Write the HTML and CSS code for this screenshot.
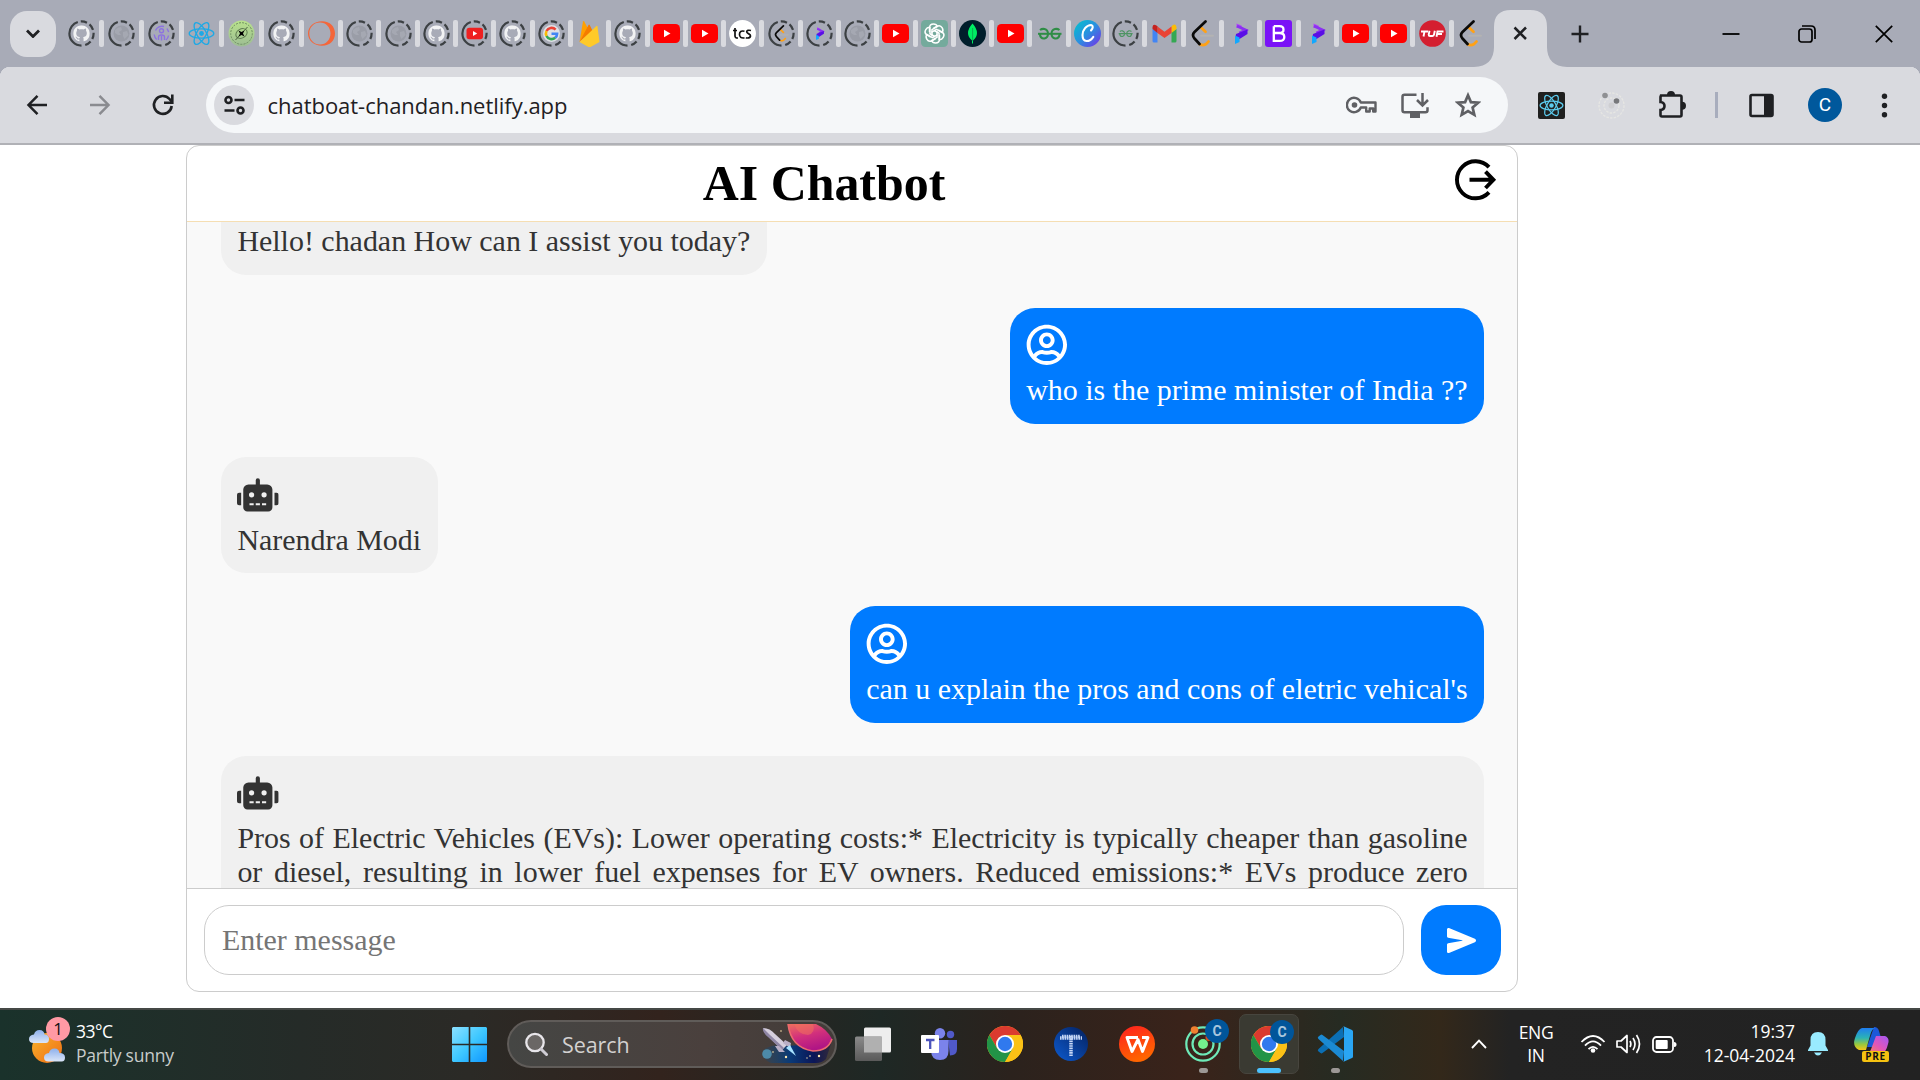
FILE: index.html
```html
<!DOCTYPE html>
<html lang="en">
<head>
<meta charset="utf-8">
<title>AI Chatbot</title>
<link rel="stylesheet" href="styles.css">
</head>
<body>
<svg class="defs" aria-hidden="true">
  <defs>
    <linearGradient id="g-canva" x1="0" y1="0" x2="1" y2="1"><stop offset="0" stop-color="#00c4cc"/><stop offset=".5" stop-color="#2a8fe0"/><stop offset="1" stop-color="#7d2ae8"/></linearGradient>
    <linearGradient id="g-green" x1="0" y1="0" x2="0" y2="1"><stop offset="0" stop-color="#b9e28c"/><stop offset="1" stop-color="#9dbd94"/></linearGradient>
    <linearGradient id="g-win" x1="0" y1="0" x2="1" y2="1"><stop offset="0" stop-color="#8be0ff"/><stop offset=".5" stop-color="#3fc8ff"/><stop offset="1" stop-color="#0f97ff"/></linearGradient>
    <linearGradient id="g-sun" x1="0" y1="0" x2="1" y2="1"><stop offset="0" stop-color="#f9b42d"/><stop offset="1" stop-color="#ef6c13"/></linearGradient>
    <linearGradient id="g-cloud" x1="0" y1="0" x2="0" y2="1"><stop offset="0" stop-color="#8db0ec"/><stop offset="1" stop-color="#dbe6f8"/></linearGradient>
    <linearGradient id="g-t" x1="1" y1="0" x2="0" y2="1"><stop offset="0" stop-color="#04205e"/><stop offset="1" stop-color="#0d5bd0"/></linearGradient>
    <linearGradient id="g-wps" x1="0" y1="0" x2=".4" y2="1"><stop offset="0" stop-color="#ff1f1f"/><stop offset="1" stop-color="#ff6500"/></linearGradient>
    <linearGradient id="g-planet" x1="0" y1="0" x2=".4" y2="1"><stop offset="0" stop-color="#f0705c"/><stop offset=".5" stop-color="#d2307c"/><stop offset="1" stop-color="#b01585"/></linearGradient>
    <linearGradient id="g-space" x1="0" y1="0" x2="1" y2="0"><stop offset="0" stop-color="#174a74" stop-opacity=".2"/><stop offset=".4" stop-color="#0a3a78"/><stop offset=".75" stop-color="#0b1658"/><stop offset="1" stop-color="#1c1740" stop-opacity=".5"/></linearGradient>
    <linearGradient id="g-gray" x1="0" y1="0" x2="0" y2="1"><stop offset="0" stop-color="#8a8a8a"/><stop offset="1" stop-color="#5a5a5a"/></linearGradient>
    <linearGradient id="g-cop" x1="0" y1="0" x2="0" y2="1"><stop offset="0" stop-color="#1f7df0"/><stop offset=".45" stop-color="#2bb3b5"/><stop offset=".75" stop-color="#9bc93c"/><stop offset="1" stop-color="#f5c518"/></linearGradient>
    <linearGradient id="g-cop2" x1="1" y1="0" x2="0" y2="1"><stop offset="0" stop-color="#a259f7"/><stop offset=".5" stop-color="#e255b8"/><stop offset="1" stop-color="#ff8a4c"/></linearGradient>

    <symbol id="ring" viewBox="0 0 27 27"><path d="M13.5 25.6A12.1 12.1 0 0 1 13.5 1.4A12.1 12.1 0 0 1 13.5 25.6" pathLength="100" fill="none" stroke="#3c4043" stroke-width="2.2" stroke-dasharray="45 4 8.5 4 8.5 4 8.5 4 8.5 5"/></symbol>
    <symbol id="octo" viewBox="0 0 16 16"><path fill="#fff" fill-opacity=".85" d="M8 0C3.58 0 0 3.58 0 8c0 3.54 2.29 6.53 5.47 7.59.4.07.55-.17.55-.38 0-.19-.01-.82-.01-1.49-2.01.37-2.53-.49-2.69-.94-.09-.23-.48-.94-.82-1.13-.28-.15-.68-.52-.01-.53.63-.01 1.08.58 1.23.82.72 1.21 1.87.87 2.33.66.07-.52.28-.87.51-1.07-1.78-.2-3.64-.89-3.64-3.95 0-.87.31-1.59.82-2.15-.08-.2-.36-1.02.08-2.12 0 0 .67-.21 2.2.82.64-.18 1.32-.27 2-.27s1.36.09 2 .27c1.53-1.04 2.2-.82 2.2-.82.44 1.1.16 1.92.08 2.12.51.56.82 1.27.82 2.15 0 3.07-1.87 3.75-3.65 3.95.29.25.54.73.54 1.48 0 1.07-.01 1.93-.01 2.2 0 .21.15.46.55.38A8.01 8.01 0 0 0 16 8c0-4.42-3.58-8-8-8z"/></symbol>
    <symbol id="github" viewBox="0 0 27 27"><use href="#ring"/><use href="#octo" x="5.2" y="5.2" width="16.6" height="16.6"/></symbol>
    <symbol id="globe" viewBox="0 0 27 27"><use href="#ring"/><circle cx="13.5" cy="13.5" r="8" fill="#9a9da7"/><path d="M7 10q3-3 6-3l1 3-3 2 2 3h-3l-3-2zM15 12l4-1 1.500 4-4 4-1.500-3z" fill="#a5a8b2"/></symbol>
    <symbol id="person" viewBox="0 0 27 27"><use href="#ring"/><g fill="none" stroke="#8c72e0" stroke-width="1.400"><circle cx="13.500" cy="10.800" r="2"/><path d="M10.500 20v-3q0-2 3-2t3 2v3M13.500 16v4.500M7.500 10.500a7 7 0 0 1 8.500-4M20.500 15.500a7 7 0 0 1-2.500 4.500M19 8.500l1.700 3.500M6.200 14.500q.5 3.500 2.500 5"/></g></symbol>
    <symbol id="atom" viewBox="0 0 27 27"><g fill="none" stroke="currentColor" stroke-width="1.300"><ellipse cx="13.500" cy="13.500" rx="12.300" ry="4.700"/><ellipse cx="13.500" cy="13.500" rx="12.300" ry="4.700" transform="rotate(60 13.500 13.500)"/><ellipse cx="13.500" cy="13.500" rx="12.300" ry="4.700" transform="rotate(120 13.500 13.500)"/></g><circle cx="13.500" cy="13.500" r="2.400" fill="currentColor"/></symbol>
    <symbol id="seal" viewBox="0 0 27 27"><circle cx="13.500" cy="13.500" r="13" fill="url(#g-green)"/><circle cx="13.500" cy="13.500" r="10.800" fill="none" stroke="#6f8f62" stroke-width="1" stroke-dasharray="2 1.200"/><ellipse cx="13.500" cy="13.500" rx="6" ry="4.500" fill="none" stroke="#5f7d50" transform="rotate(-30 13.500 13.500)"/><path d="M7.500 20L19.500 7" stroke="#4a6340"/><path d="M10.500 10.500l3 1.500 3-1.500-1.500 3 1.500 3-3-1.500-3 1.500 1.500-3z"/></symbol>
    <symbol id="orbit" viewBox="0 0 27 27"><path fill="#f4663a" fill-rule="evenodd" d="M14 1.200C22 1.200 27 6.500 27 13.500S22 25.800 14 25.800 0 20.500 0 13.500 6 1.200 14 1.200zM12 2.500C6 2.500 1.300 7.200 1.300 13.500S6 24.500 12 24.500s10.500-4.800 10.500-11S18 2.500 12 2.500z"/></symbol>
    <symbol id="yt" viewBox="0 0 27 27"><rect x="0" y="4" width="27" height="19" rx="4.500" fill="#f00"/><path d="M11 9.800l6.500 3.700-6.500 3.700z" fill="#fff"/></symbol>
    <symbol id="ytring" viewBox="0 0 27 27"><use href="#ring"/><rect x="5.500" y="7.700" width="16.500" height="11.600" rx="2.800" fill="#ee2020"/><path d="M12 11l4.200 2.500-4.200 2.500z" fill="#fff"/></symbol>
    <symbol id="google" viewBox="0 0 27 27"><use href="#ring"/><circle cx="13.500" cy="13.500" r="8.500" fill="#dfe1e6"/><g fill="none" stroke-width="2.600"><path d="M17.600 9.600A5.600 5.600 0 0 0 8.500 11" stroke="#ea4335"/><path d="M8.500 11a5.600 5.600 0 0 0 0 5" stroke="#fbbc05"/><path d="M8.500 16a5.600 5.600 0 0 0 8.700 1.800" stroke="#34a853"/><path d="M17.200 17.800a5.600 5.600 0 0 0 1.900-4.100H13.500" stroke="#4285f4"/></g></symbol>
    <symbol id="fire" viewBox="0 0 27 27"><path d="M3.500 22L7 1.500q.5-1 1.200 0L12 8.500z" fill="#ffa000"/><path d="M3.500 22L12.500 5q.6-.8 1.200 0l3 6z" fill="#f57c00"/><path d="M3.500 22L20.500 6q.7-.5 1 .4L23.500 22l-9 5q-1 .4-2 0z" fill="#ffca28"/></symbol>
    <symbol id="tcs" viewBox="0 0 27 27"><circle cx="13.500" cy="13.500" r="13.400" fill="#fff"/><g fill="none" stroke="#111" stroke-width="1.700"><path d="M6 8v8q0 2.200 3 2M4 10.500h4M15.500 11.300q-5-1.300-5 3t5 3.600M22 10.500q-4-.8-4.300 1.200c-.3 2.300 4 1.500 3.800 4.300q-.5 2.600-4.700 1.800"/></g></symbol>
    <symbol id="leet" viewBox="0 0 27 27"><g fill="none" stroke-linecap="round"><path d="M11.500 7l5 4.800M10.500 24q5 3 9-2.500" stroke="#ffa116" stroke-width="2.700"/><path d="M16.500 1.500L5.500 12q-3 3 0 6.500l5 5.500" stroke="#0a0a0a" stroke-width="2.700"/><path d="M12 15.700h12" stroke="#b3b3b3" stroke-width="2"/></g></symbol>
    <symbol id="leetring" viewBox="0 0 27 27"><use href="#ring"/><use href="#leet" x="5" y="5" width="17" height="17"/></symbol>
    <symbol id="pp" viewBox="0 0 27 27"><path d="M9.500 3.500l5 2 1 2.500-6 0z" fill="#b14cf5"/><path d="M10 6l8.500 4-6 3" fill="none" stroke="#8b30f2" stroke-width="3"/><path d="M20.500 9.500v4.500l-8 5-4-1 .5-4z" fill="#5a0ee6"/><path d="M8 15.500l4.500 2V22L8 24z" fill="#12a8ff"/></symbol>
    <symbol id="ppring" viewBox="0 0 27 27"><use href="#ring"/><use href="#pp" x="5" y="5" width="17" height="17"/></symbol>
    <symbol id="gpt" viewBox="0 0 27 27"><rect width="27" height="27" rx="4.500" fill="#74aa9c"/><g fill="none" stroke="#fff" stroke-width="1.500"><g id="petal"><path d="M8.500 12V8q0-4 4-4 3 0 4 2.500L11 9.700v6"/></g><use href="#petal" transform="rotate(60 13.500 13.500)"/><use href="#petal" transform="rotate(120 13.500 13.500)"/><use href="#petal" transform="rotate(180 13.500 13.500)"/><use href="#petal" transform="rotate(240 13.500 13.500)"/><use href="#petal" transform="rotate(300 13.500 13.500)"/></g></symbol>
    <symbol id="mongo" viewBox="0 0 27 27"><circle cx="13.500" cy="13.500" r="13.500" fill="#001e2b"/><path d="M13.500 3.500q4.500 5 4.500 9.500 0 4-4 7.500v3h-1v-3q-4-3.500-4-7.500 0-4.500 4.500-9.500z" fill="#00ed64"/><path d="M13.600 8v13" stroke="#0aa04c" stroke-width=".8"/></symbol>
    <symbol id="gfg" viewBox="0 0 27 27"><g fill="none" stroke="#2f8d46" stroke-width="2"><path d="M4 10q2-1.500 4.500-1 3.500 1 3.500 4.700t-3.500 4.800Q4.500 19 3.800 14M23.500 10q-2-1.500-4.500-1-3.500 1-3.500 4.700t3.500 4.800q4 .5 4.700-4.500"/><path d="M2 13.800h23.500"/></g></symbol>
    <symbol id="gfgring" viewBox="0 0 27 27"><use href="#ring"/><use href="#gfg" x="5.500" y="5.500" width="16" height="16" opacity=".75"/></symbol>
    <symbol id="canva" viewBox="0 0 27 27"><circle cx="13.500" cy="13.500" r="13.500" fill="url(#g-canva)"/><path d="M17 10.500q3.500-4.500 0-5.500c-4.500 0-8.500 5-8.500 10 0 8 7 7.500 10.800 1.800" fill="none" stroke="#fff" stroke-width="2.100" stroke-linecap="round"/></symbol>
    <symbol id="gmail" viewBox="0 0 27 27"><path d="M1.500 9v12q0 1.500 1.500 1.500h3.500V12z" fill="#4285f4"/><path d="M20.500 12v10.500H24q1.500 0 1.500-1.500V9z" fill="#34a853"/><path d="M20.500 6.500V13l5-4V7q-1-4-4-1.500z" fill="#fbbc04"/><path d="M6.500 13V6.500l7 5.300 7-5.300V13l-7 5z" fill="#ea4335"/><path d="M1.500 7v2l5 4V6.500l-1-1q-3.500-2-4 1.500z" fill="#c5221f"/></symbol>
    <symbol id="boot" viewBox="0 0 27 27"><rect width="27" height="27" rx="3" fill="#7a12f7"/><path d="M8.800 6.200h5.700q4 0 4 3.500 0 3.300-4 3.300H8.800m5.700 0q4.800.1 4.800 3.900 0 4-4.800 4H8.800V6.200" fill="none" stroke="#fff" stroke-width="2.300"/></symbol>
    <symbol id="tuf" viewBox="0 0 27 27"><circle cx="13.500" cy="13.500" r="13.300" fill="#d41f30"/><path d="M2 11.500h7M5.500 11.500l-1 5M10.500 10.700l-.8 4q0 1.300 1.300 1.300h2.500q1.300 0 1.500-1.300l.8-4M17.500 16.700l1-5.200h6M18 14h5" fill="none" stroke="#fff" stroke-width="1.900"/></symbol>

    <symbol id="robot" viewBox="0 0 640 512"><path fill="currentColor" d="M32,224H64V416H32A31.96166,31.96166,0,0,1,0,384V256A31.96166,31.96166,0,0,1,32,224Zm512-48V448a64.06328,64.06328,0,0,1-64,64H160a64.06328,64.06328,0,0,1-64-64V176a79.974,79.974,0,0,1,80-80H288V32a32,32,0,0,1,64,0V96H464A79.974,79.974,0,0,1,544,176ZM264,256a40,40,0,1,0-40,40A39.997,39.997,0,0,0,264,256Zm-8,128H192v32h64Zm96,0H288v32h64ZM456,256a40,40,0,1,0-40,40A39.997,39.997,0,0,0,456,256Zm-8,128H384v32h64ZM640,256V384a31.96166,31.96166,0,0,1-32,32H576V224h32A31.96166,31.96166,0,0,1,640,256Z"/></symbol>
    <symbol id="user" viewBox="0 0 496 512"><path fill="currentColor" d="M248 104c-53 0-96 43-96 96s43 96 96 96 96-43 96-96-43-96-96-96zm0 144c-26.500 0-48-21.500-48-48s21.500-48 48-48 48 21.500 48 48-21.500 48-48 48zm0-240C111 8 0 119 0 256s111 248 248 248 248-111 248-248S385 8 248 8zm0 448c-49.700 0-95.100-18.300-130.100-48.400 14.900-23 40.400-38.600 69.600-39.500 20.800 6.400 40.600 9.600 60.500 9.600s39.700-3.100 60.500-9.600c29.200 1 54.700 16.500 69.600 39.500-35 30.100-80.400 48.400-130.100 48.400zm162.700-84.100c-24.400-31.400-62.100-51.900-105.100-51.900-10.200 0-26 9.600-57.600 9.600-31.500 0-47.400-9.600-57.600-9.600-42.900 0-80.600 20.500-105.100 51.900C61.900 339.200 48 299.200 48 256c0-110.300 89.700-200 200-200s200 89.700 200 200c0 43.200-13.900 83.200-37.300 115.900z"/></symbol>
    <symbol id="chrome" viewBox="0 0 36 36"><circle cx="18" cy="18" r="18" fill="#fbc116"/><path d="M18 18L33.600 9A18 18 0 0 0 2.400 9L10.200 22.500z" fill="#db3a2f"/><path d="M2.400 9A18 18 0 0 0 18 36l7.800-13.500-15.600 0z" fill="#229447"/><path d="M18 9h15.600A18 18 0 0 1 18 36l7.800-13.500z" fill="#fbc116"/><circle cx="18" cy="18" r="9" fill="#fff"/><circle cx="18" cy="18" r="7.200" fill="#3079ee"/></symbol>
  </defs>
</svg>

<div class="screen">
  <header class="tabstrip">
    <div class="tab-search"><svg width="14" height="9" viewBox="0 0 14 9"><path d="M1 1.500l6 6 6-6" fill="none" stroke="#1f2023" stroke-width="2.800"/></svg></div>
    <div class="tabs">
      <div class="tab wide"><svg><use href="#github"/></svg><i></i></div>
      <div class="tab wide"><svg><use href="#globe"/></svg><i></i></div>
      <div class="tab wide"><svg><use href="#person"/></svg><i></i></div>
      <div class="tab wide react"><svg><use href="#atom"/></svg><i></i></div>
      <div class="tab wide"><svg><use href="#seal"/></svg><i></i></div>
      <div class="tab wide"><svg><use href="#github"/></svg><i></i></div>
      <div class="tab"><svg><use href="#orbit"/></svg><i></i></div>
      <div class="tab"><svg><use href="#globe"/></svg><i></i></div>
      <div class="tab"><svg><use href="#globe"/></svg><i></i></div>
      <div class="tab"><svg><use href="#github"/></svg><i></i></div>
      <div class="tab"><svg><use href="#ytring"/></svg><i></i></div>
      <div class="tab"><svg><use href="#github"/></svg><i></i></div>
      <div class="tab"><svg><use href="#google"/></svg><i></i></div>
      <div class="tab"><svg><use href="#fire"/></svg><i></i></div>
      <div class="tab"><svg><use href="#github"/></svg><i></i></div>
      <div class="tab"><svg><use href="#yt"/></svg><i></i></div>
      <div class="tab"><svg><use href="#yt"/></svg><i></i></div>
      <div class="tab"><svg><use href="#tcs"/></svg><i></i></div>
      <div class="tab"><svg><use href="#leetring"/></svg><i></i></div>
      <div class="tab"><svg><use href="#ppring"/></svg><i></i></div>
      <div class="tab"><svg><use href="#globe"/></svg><i></i></div>
      <div class="tab"><svg><use href="#yt"/></svg><i></i></div>
      <div class="tab"><svg><use href="#gpt"/></svg><i></i></div>
      <div class="tab"><svg><use href="#mongo"/></svg><i></i></div>
      <div class="tab"><svg><use href="#yt"/></svg><i></i></div>
      <div class="tab"><svg><use href="#gfg"/></svg><i></i></div>
      <div class="tab"><svg><use href="#canva"/></svg><i></i></div>
      <div class="tab"><svg><use href="#gfgring"/></svg><i></i></div>
      <div class="tab"><svg><use href="#gmail"/></svg><i></i></div>
      <div class="tab"><svg><use href="#leet"/></svg><i></i></div>
      <div class="tab"><svg><use href="#pp"/></svg><i></i></div>
      <div class="tab"><svg><use href="#boot"/></svg><i></i></div>
      <div class="tab"><svg><use href="#pp"/></svg><i></i></div>
      <div class="tab"><svg><use href="#yt"/></svg><i></i></div>
      <div class="tab"><svg><use href="#yt"/></svg><i></i></div>
      <div class="tab"><svg><use href="#tuf"/></svg><i></i></div>
      <div class="tab last"><svg><use href="#leet"/></svg></div>
    </div>
    <svg class="active-tab" width="93" height="57" viewBox="0 0 93 57"><path d="M0 57Q20 56 20 37V17Q20 0 37 0H56Q73 0 73 17V37Q73 56 93 57z" fill="#d9dadf"/><path d="M40.500 17.500l11.500 11.500M52 17.500L40.500 29" stroke="#1f2023" stroke-width="2.500"/></svg>
    <svg class="new-tab" width="18" height="18" viewBox="0 0 18 18"><path d="M9 .5v17M.5 9h17" stroke="#1f2023" stroke-width="2.400"/></svg>
    <div class="window-controls">
      <svg width="18" height="18" viewBox="0 0 18 18"><path d="M.5 9h17" stroke="#000" stroke-width="1.800"/></svg>
      <svg width="18" height="18" viewBox="0 0 18 18"><g fill="none" stroke="#000" stroke-width="1.700"><rect x="1" y="4" width="13" height="13" rx="2.500"/><path d="M4 1h9q4 0 4 4v9"/></g></svg>
      <svg width="18" height="18" viewBox="0 0 18 18"><path d="M.8.800l16.400 16.400M17.200.800L.8 17.200" stroke="#000" stroke-width="1.700"/></svg>
    </div>
  </header>

  <nav class="toolbar">
    <svg class="nav-back" width="24" height="24" viewBox="0 0 24 24"><path d="M12.500 2.800L3.500 12l9 9.200M3.500 12H22" fill="none" stroke="#1f2023" stroke-width="2.500"/></svg>
    <svg class="nav-forward" width="24" height="24" viewBox="0 0 24 24"><path d="M11.500 2.800l9 9.200-9 9.200M20.500 12H2" fill="none" stroke="#8a8b90" stroke-width="2.500"/></svg>
    <svg class="nav-reload" width="24" height="24" viewBox="0 0 24 24"><path d="M20.700 13A8.900 8.900 0 1 1 18.500 6l2 2.500" fill="none" stroke="#1f2023" stroke-width="2.600"/><path d="M21.300 1.500V9.800H13" fill="none" stroke="#1f2023" stroke-width="2.600"/></svg>
    <div class="omnibox">
      <span class="site-info"><svg width="21" height="20" viewBox="0 0 21 20"><g fill="none" stroke="#1f2023" stroke-width="2.600"><circle cx="4.500" cy="5" r="3"/><path d="M10.500 5H20.500M.5 15.500h10"/><circle cx="16.500" cy="15.500" r="3"/></g></svg></span>
      <span class="url">chatboat-chandan.netlify.app</span>
      <svg class="key" width="31" height="18" viewBox="0 0 31 18"><path d="M14.800 6.500H29.500v9h-2.300v-3h-3.500v3h-3.500v-4h-5.400A7.200 7.200 0 1 1 14.800 6.500z" fill="none" stroke="#5f6064" stroke-width="2.400" stroke-linejoin="round"/><circle cx="8.500" cy="9" r="2.800" fill="#5f6064"/></svg>
      <svg class="install" width="28" height="25" viewBox="0 0 28 25"><path d="M15.500 1.700H3.500q-2 0-2 2v13.500q0 2 2 2h21q2 0 2-2v-3M21.500 0v12M16 7l5.500 5.500L27 7" fill="none" stroke="#5f6064" stroke-width="2.500"/><path d="M9 20h10v5H9z" fill="#5f6064"/></svg>
      <svg class="star" width="26" height="26" viewBox="0 0 26 26"><path d="M13 3.300l2.900 6.800 7.300.6-5.600 4.900 1.700 7.200L13 19l-6.300 3.800 1.700-7.200-5.600-4.900 7.300-.6z" fill="none" stroke="#5f6064" stroke-width="2.700"/></svg>
    </div>
    <span class="ext-react"><svg width="25" height="25"><use href="#atom"/></svg></span>
    <svg class="ext-orbit" width="27" height="27" viewBox="0 0 27 27"><g fill="none" stroke="#e6e6e3" stroke-width="1.300" stroke-dasharray="2.500 1.200"><circle cx="13.500" cy="13.500" r="12.500"/><circle cx="13.500" cy="13.500" r="7.500"/></g><circle cx="13.500" cy="13.500" r="3" fill="#cfcfd2"/><circle cx="7" cy="3.500" r="2.800" fill="#8f9093"/><circle cx="18.500" cy="9" r="2.800" fill="#77787b"/></svg>
    <svg class="puzzle" width="30" height="30" viewBox="0 0 30 30"><path d="M4 6.500h19q1.500 0 1.500 1.500v18q0 1.500-1.500 1.500H5q-1.500 0-1.500-1.500v-5q4-.5 4-4t-4-4V8z" fill="none" stroke="#1f2023" stroke-width="2.600"/><path d="M10 6a4 4 0 0 1 8 0zM25 12.800a4 4 0 0 1 0 8z" fill="#1f2023"/></svg>
    <i class="divider"></i>
    <svg class="panel" width="25" height="25" viewBox="0 0 25 25"><rect x="1.500" y="2" width="22" height="21" rx="1.500" fill="none" stroke="#1f2023" stroke-width="2.600"/><path d="M15 2h9v21h-9z" fill="#1f2023"/></svg>
    <span class="avatar">C</span>
    <svg class="kebab" width="25" height="25" viewBox="0 0 25 25"><g fill="#1f2023"><circle cx="12.500" cy="3.300" r="2.700"/><circle cx="12.500" cy="12.500" r="2.700"/><circle cx="12.500" cy="21.700" r="2.700"/></g></svg>
  </nav>

  <main class="page">
    <section class="chat">
      <div class="chat-header">
        <h1>AI Chatbot</h1>
        <svg class="logout" width="42" height="42" viewBox="0 0 42 42"><g fill="none" stroke="#000" stroke-width="3.900"><path d="M34 8.200A18.500 18.500 0 1 0 34 33.400"/><path d="M14.500 20.800H38M30.500 12.600l7.900 8.200-7.900 8.200"/></g></svg>
      </div>
      <div class="messages">
        <div class="bubble bot"><svg class="who"><use href="#robot"/></svg><p>Hello! chadan How can I assist you today?</p></div>
        <div class="bubble me"><svg class="who"><use href="#user"/></svg><p>who is the prime minister of India ??</p></div>
        <div class="bubble bot"><svg class="who"><use href="#robot"/></svg><p>Narendra Modi</p></div>
        <div class="bubble me"><svg class="who"><use href="#user"/></svg><p>can u explain the pros and cons of eletric vehical's</p></div>
        <div class="bubble bot long"><svg class="who"><use href="#robot"/></svg><p>Pros of Electric Vehicles (EVs): Lower operating costs:* Electricity is typically cheaper than gasoline or diesel, resulting in lower fuel expenses for EV owners. Reduced emissions:* EVs produce zero</p></div>
      </div>
      <form class="composer">
        <input type="text" placeholder="Enter message">
        <button type="button" aria-label="Send"><svg width="31" height="31" viewBox="0 0 512 512"><path fill="#fff" d="M476.590 227.050l-.16-.07L49.350 49.840A23.560 23.560 0 0027.140 52 24.650 24.650 0 0016 72.590v113.290a24 24 0 0019.520 23.570l232.930 43.070a4 4 0 010 7.860L35.530 303.450A24 24 0 0016 327v113.310A23.570 23.570 0 0026.590 460a23.940 23.940 0 0013.220 4 24.550 24.550 0 009.520-1.930L476.400 285.940l.19-.09a32 32 0 000-58.800z"/></svg></button>
      </form>
    </section>
  </main>

  <footer class="taskbar">
    <div class="weather">
      <svg width="50" height="44" viewBox="0 0 50 44"><circle cx="27" cy="26" r="15" fill="url(#g-sun)"/><path d="M13.500 21q-4.500 0-4.500-4t5-4.500Q15 8 19.500 8t5 4.500q4.500 0 4.500 4.500t-4 4z" fill="url(#g-cloud)"/><path d="M28.500 39.500q-4.500 0-4.500-4t5-4.500q1-4.500 5.500-4.500t5 4.500q5.500 0 5.500 4.500t-4 4z" fill="url(#g-cloud)"/></svg>
      <b class="count">1</b>
      <p><span>33°C</span><span class="dim">Partly sunny</span></p>
    </div>
    <svg class="start" width="35" height="35" viewBox="0 0 35 35"><path d="M1 0h15.700v16.700H0V1zM18.300 0H34l1 1v15.700H18.300zM0 18.300h16.700V35H1l-1-1zM18.300 18.300H35V34l-1 1H18.300z" fill="url(#g-win)"/></svg>
    <div class="search">
      <svg width="24" height="24" viewBox="0 0 24 24"><circle cx="11" cy="10.500" r="8.700" fill="#6a6765" stroke="#e8e6ea" stroke-width="2.300"/><path d="M17 17l5.500 5.500" stroke="#cfcdd4" stroke-width="3" stroke-linecap="round"/></svg>
      <span>Search</span>
      <svg class="space" width="72" height="40" viewBox="0 0 72 40"><path d="M2 26q8-6 18-4l50-2-5 15q-4 4-10 4H10q-8-2-8-13z" fill="url(#g-space)"/><circle cx="6" cy="30" r="4.800" fill="#4d8aa8"/><path d="M27 0H55Q66 5 71 15 67 27 52 27 30 24 27 0z" fill="url(#g-planet)"/><path d="M27 0q3 24 25 27 15 0 19-12" fill="none" stroke="#ec6a6e" stroke-width="1.600"/><path d="M33 0q4 11 14 11 8-2 5-11z" fill="#f0705c" opacity=".55"/><path d="M2 4q7 0 12 6l12 11-5 5L8 13Q3 9 2 4z" fill="#d5cedd"/><path d="M2 4q-1 4 5 9l14 13 2-2L9 11z" fill="#8f86a5"/><path d="M24 16l6 3-1 5 -7-5zM14 22l4 6h6l-6-6z" fill="#b9afc6"/><path d="M25 24l4-3 6 11z" fill="#a8e2ff"/><g fill="#ffe9b0"><circle cx="25" cy="33" r="1.200"/><circle cx="58" cy="32" r="1.200"/><circle cx="49" cy="32" r=".8"/><circle cx="20" cy="7" r=".8"/><circle cx="46" cy="34" r=".7"/><circle cx="12" cy="28" r=".8"/></g></svg>
    </div>
    <div class="apps">
      <div class="app"><svg width="36" height="36" viewBox="0 0 36 36"><rect x="9" y="1.500" width="27" height="25" rx="1.500" fill="#eee"/><rect x="0" y="10.500" width="27" height="24.500" rx="1.500" fill="url(#g-gray)"/><path d="M9 10.500h18v16H9z" fill="#b0b0b0"/></svg></div>
      <div class="app"><svg width="36" height="36" viewBox="0 0 36 36"><circle cx="29.500" cy="8.500" r="3.700" fill="#5059c9"/><path d="M27 14h9v9q0 6.500-7 6.500z" fill="#5059c9"/><circle cx="19" cy="7.200" r="5.200" fill="#7b83eb"/><path d="M10 14h17.500v11q0 9-8.500 9t-9-9z" fill="#7b83eb"/><rect x="0" y="9" width="18" height="18" rx="1" fill="#fff"/><path d="M5 14h8.500M9.200 14v9" stroke="#4b53bc" stroke-width="2.300"/></svg></div>
      <div class="app"><svg width="36" height="36"><use href="#chrome"/></svg></div>
      <div class="app"><svg width="34" height="34" viewBox="0 0 34 34"><circle cx="17" cy="17" r="17" fill="url(#g-t)"/><path d="M6 11H28M8 9.500h18M17 9v20" fill="none" stroke="#c5d6f5" stroke-width="3.500" stroke-dasharray="1.600 .7"/></svg></div>
      <div class="app"><svg width="36" height="36" viewBox="0 0 36 36"><circle cx="18" cy="18" r="18" fill="url(#g-wps)"/><path d="M19 11.500H8l5 14 6-12 4.500 12L29 11.500h-6" fill="none" stroke="#fff" stroke-width="2.900" stroke-linejoin="round"/></svg></div>
      <div class="app running"><svg width="36" height="36" viewBox="0 0 36 36"><g fill="none" stroke="#6eeab8" stroke-width="2.200"><circle cx="18" cy="18" r="16.700"/><circle cx="18" cy="18" r="10.500"/></g><circle cx="18" cy="18" r="5" fill="#74f08e"/><circle cx="9.500" cy="4" r="3.800" fill="#f08030"/><circle cx="24" cy="11.500" r="3.500" fill="#d5501c"/></svg><b class="badge">C</b></div>
      <div class="app current"><svg width="36" height="36"><use href="#chrome"/></svg><b class="badge">C</b></div>
      <div class="app running"><svg width="36" height="36" viewBox="0 0 36 36"><path d="M26 1L1.500 23q-1.500 1.300 0 2.500L3.500 27q1 .8 2 0L27 11z" fill="#0b6fb4"/><path d="M26 35L1.500 13q-1.500-1.300 0-2.500L3.500 9q1-.8 2 0L27 25z" fill="#1b8ad3"/><path d="M26 0l9 4q1 .5 1 1.500v25q0 1-1 1.500l-9 4q1-.5 1-2V2q0-1.500-1-2z" fill="#2aa6f3"/></svg></div>
    </div>
    <div class="tray">
      <svg class="up" width="16" height="10" viewBox="0 0 16 10"><path d="M1 9l7-7.300L15 9" fill="none" stroke="#fff" stroke-width="1.900"/></svg>
      <p class="lang"><span>ENG</span><span>IN</span></p>
      <svg class="wifi" width="26" height="20" viewBox="0 0 26 20"><g fill="none" stroke="#fff" stroke-width="1.800"><path d="M1.500 8q11.500-12 23 0M5 11.700q8-8.500 16 0M8.500 15.200q4.500-4.700 9 0"/></g><circle cx="13" cy="16.500" r="2.300" fill="#fff"/></svg>
      <svg class="sound" width="25" height="20" viewBox="0 0 25 20"><g fill="none" stroke="#fff" stroke-width="1.700"><path d="M1 7h4l6-5.500v17L5 13H1zM14 7q1.700 3 0 6M17 4q4 6 0 12M20.500 1q6 9 0 18" stroke-linejoin="round"/></g></svg>
      <svg class="battery" width="25" height="17" viewBox="0 0 25 17"><rect x="1" y="1" width="20" height="15" rx="3.500" fill="none" stroke="#fff" stroke-width="1.800"/><rect x="3.700" y="4" width="12" height="9" rx="1" fill="#fff"/><path d="M22 6q2.500 0 2.500 2.500T22 11z" fill="#fff"/></svg>
      <p class="clock"><span>19:37</span><span>12-04-2024</span></p>
      <svg class="bell" width="20" height="24" viewBox="0 0 20 24"><path d="M10 0q7.500 0 7.500 8v5.500L20 18v1H0v-1l2.500-4.500V8q0-8 7.500-8zM6 20.500h8q-1.500 3-4 3t-4-3z" fill="#99ebff"/></svg>
      <div class="copilot"><svg width="35" height="28" viewBox="0 0 35 28"><path d="M20 0q4 0 5 4l1.500 5h4L27 20H13z" fill="#1c58d9"/><path d="M8 1h13q-3 1-4.500 6L12 23H5q-7-3-4-12Q4 2 8 1z" fill="url(#g-cop)"/><path d="M22 9h9q5 2 3 8-2 9-7 10H12q4-1 5.500-6z" fill="url(#g-cop2)"/></svg><b class="pre">PRE</b></div>
    </div>
  </footer>
</div>
</body>
</html>
```
FILE: styles.css
```css
* { box-sizing: border-box; }

body {
  margin: 0;
  background: #fff;
  overflow: hidden;
}

p, h1 { margin: 0; }
svg { display: block; flex: none; }
.defs { position: absolute; width: 0; height: 0; }

.screen {
  width: 1920px;
  height: 1080px;
  display: flex;
  flex-direction: column;
  overflow: hidden;
  background: #fff;
}

/* Browser tab strip */
.tabstrip {
  height: 67px;
  flex: none;
  display: flex;
  align-items: center;
  background: #a8abb7;
  padding-left: 10px;
}
.tab-search {
  width: 46px;
  height: 46px;
  border-radius: 17px;
  background: #d9dadf;
  display: flex;
  align-items: center;
  justify-content: center;
}
.tabs { display: flex; margin-left: 12px; }
.tab {
  width: 38.3px;
  display: flex;
  align-items: center;
  flex: none;
}
.tab.wide { width: 40px; }
.tab.last { width: 27px; }
.tab svg { width: 27px; height: 27px; }
.tab i {
  width: 5px;
  height: 27px;
  margin: 0 auto;
  border-radius: 2px;
  background: #d9dadf;
}
.tab.react { color: #1ca9e6; }
.active-tab { align-self: flex-end; margin-left: -10px; }
.new-tab { margin-left: 4px; }
.window-controls {
  margin-left: auto;
  margin-right: 27.5px;
  display: flex;
  gap: 58.5px;
}

/* Toolbar, with rounded top corners over the strip colour */
.toolbar {
  height: 78px;
  flex: none;
  display: flex;
  align-items: center;
  padding-left: 25px;
  background:
    radial-gradient(circle at 10px 10px, #d9dadf 10px, #a8abb7 10.5px) 0 0 / 10px 10px no-repeat,
    radial-gradient(circle at 0 10px, #d9dadf 10px, #a8abb7 10.5px) 100% 0 / 10px 10px no-repeat,
    #d9dadf;
  border-bottom: 2px solid #b0b1b6;
}
.nav-forward, .nav-reload { margin-left: 39px; }
.omnibox {
  width: 1302px;
  height: 56px;
  margin-left: 31px;
  padding: 0 27px 0 8px;
  border-radius: 28px;
  background: #f5f7f9;
  display: flex;
  align-items: center;
}
.site-info {
  width: 40px;
  height: 40px;
  border-radius: 50%;
  background: #d9dadf;
  display: flex;
  align-items: center;
  justify-content: center;
}
.url {
  margin-left: 13.5px;
  margin-right: auto;
  font: 22px/30px "Open Sans", sans-serif;
  letter-spacing: -.03px;
  color: #1f2023;
}
.install { margin-left: 24px; }
.star { margin-left: 26px; }
.ext-react {
  width: 27px;
  height: 27px;
  margin-left: 30px;
  border-radius: 2px;
  background: #20201f;
  color: #5ccbee;
  display: flex;
  align-items: center;
  justify-content: center;
}
.ext-orbit { margin-left: 33px; }
.puzzle { margin-left: 32px; margin-bottom: 3px; }
.divider { width: 3px; height: 26px; margin-left: 28px; background: #a8adbd; }
.panel { margin-left: 31px; }
.avatar {
  width: 34px;
  height: 34px;
  margin-left: 34px;
  border-radius: 50%;
  background: #00589c;
  color: #fff;
  font: 19px/34px Roboto, sans-serif;
  text-align: center;
}
.kebab { margin-left: 30px; }

/* Chat page */
.page { height: 863px; flex: none; padding-left: 186px; }
.chat {
  width: 1332px;
  height: 847px;
  border: 1px solid #ccc;
  border-radius: 13px;
  overflow: hidden;
  display: flex;
  flex-direction: column;
  font-family: "Liberation Serif", serif;
}
.chat-header {
  height: 76px;
  flex: none;
  display: flex;
  align-items: flex-start;
  padding: 8.5px 20px 0 6px;
  border-bottom: 1px solid wheat;
}
.chat-header h1 {
  flex: 1;
  text-align: center;
  font-size: 49.9px;
  line-height: 58px;
  font-weight: bold;
}
.logout { margin-top: 4.5px; }
.messages {
  height: 666px;
  flex: none;
  overflow: hidden;
  background: #f9f9f9;
  padding: 0 33px 0 34px;
  display: flex;
  flex-direction: column;
  gap: 33px;
}
.bubble {
  flex: none;
  padding: 16.67px 16.4px;
  border-radius: 25px;
  font-size: 29.95px;
  line-height: 34px;
}
.bubble:first-child { margin-top: -63.5px; }
.bubble.bot { align-self: flex-start; background: #f0f0f0; color: #333; }
.bubble.me { align-self: flex-end; background: #007bff; color: #fff; }
.bubble.long { height: 180px; text-align: justify; text-align-last: justify; }
.who { width: 41.67px; height: 41.67px; margin-bottom: 7.3px; }
.composer {
  height: 103px;
  flex: none;
  border-top: 1px solid #ccc;
  padding: 16px 16px 16px 17px;
  display: flex;
  gap: 17px;
}
.composer input {
  width: 1200px;
  height: 70px;
  padding: 0 17px;
  border: 1px solid #ccc;
  border-radius: 25px;
  font: 29.95px "Liberation Serif", serif;
  background: #fff;
}
.composer input::placeholder { color: #757575; }
.composer button {
  width: 80px;
  height: 70px;
  padding: 0;
  border: 0;
  border-radius: 25px;
  background: #007bff;
  display: flex;
  align-items: center;
  justify-content: center;
}

/* Taskbar */
.taskbar {
  height: 72px;
  flex: none;
  display: flex;
  align-items: center;
  border-top: 2px solid #454846;
  padding: 0 0 2px 20px;
  font-family: "Open Sans", sans-serif;
  color: #fff;
  background: linear-gradient(90deg, #1a322b 0, #252b28 300px, #2b2a26 470px, #32231d 660px, #1e2825 880px, #2b221d 1010px, #3a231a 1190px, #262b22 1340px, #33281a 1440px, #232323 1510px, #222 1920px);
}
.weather {
  width: 432px;
  display: flex;
  align-items: center;
  position: relative;
}
.count {
  position: absolute;
  left: 26px;
  top: -4px;
  width: 24px;
  height: 24px;
  border-radius: 50%;
  background: #ff99a4;
  color: #111;
  font: 17px/24px "Open Sans", sans-serif;
  text-align: center;
}
.weather p { margin-left: 6px; margin-top: -2px; font-size: 17.5px; line-height: 24px; letter-spacing: -.5px; }
.weather span { display: block; }
.weather .dim { color: #c8cccb; letter-spacing: -.25px; }
.search {
  width: 330px;
  height: 48px;
  margin-left: 20px;
  padding: 0 2px 0 15px;
  border: 2px solid #605c59;
  border-radius: 24px;
  background: linear-gradient(90deg, #454644, #4a403d 60%, #423c39);
  display: flex;
  align-items: center;
}
.search span { margin-left: 14px; margin-right: auto; font-size: 21.5px; letter-spacing: -.1px; color: #d3d1d0; }
.apps { display: flex; margin-left: 6px; gap: 6px; }
.app {
  width: 60px;
  height: 60px;
  border-radius: 7px;
  display: flex;
  align-items: center;
  justify-content: center;
  position: relative;
}
.app.current { background: #3a3a32; border: 1px solid #47453e; }
.app.running::after, .app.current::after {
  content: "";
  position: absolute;
  bottom: 1px;
  left: 50%;
  width: 9px;
  height: 5px;
  margin-left: -4.5px;
  border-radius: 3px;
  background: #9c9896;
}
.app.current::after { width: 24px; margin-left: -12px; bottom: 0; background: #4cc2ff; }
.badge {
  position: absolute;
  top: 5px;
  right: 4px;
  width: 24px;
  height: 24px;
  border-radius: 50%;
  background: #00559a;
  color: #a8c6dd;
  font: bold 14px/24px Roboto, sans-serif;
  text-align: center;
}
.tray { display: flex; align-items: center; margin-left: 106px; font-size: 17.5px; line-height: 23px; }
.tray span { display: block; }
.lang { width: 50px; margin-left: 24px; text-align: center; letter-spacing: -.4px; }
.wifi { margin-left: 19px; }
.sound { margin-left: 10px; }
.battery { margin-left: 11px; }
.clock { width: 118px; text-align: right; line-height: 24px; letter-spacing: 0; margin-top: -2px; }
.bell { margin-left: 13px; }
.copilot { width: 35px; height: 35px; margin-left: 26px; position: relative; }
.pre {
  position: absolute;
  right: 0;
  bottom: 0;
  width: 27px;
  height: 11px;
  border-radius: 2px;
  background: #f5c211;
  color: #111;
  font: bold 10px/11px "Open Sans", sans-serif;
  letter-spacing: .6px;
  text-align: center;
}
```
